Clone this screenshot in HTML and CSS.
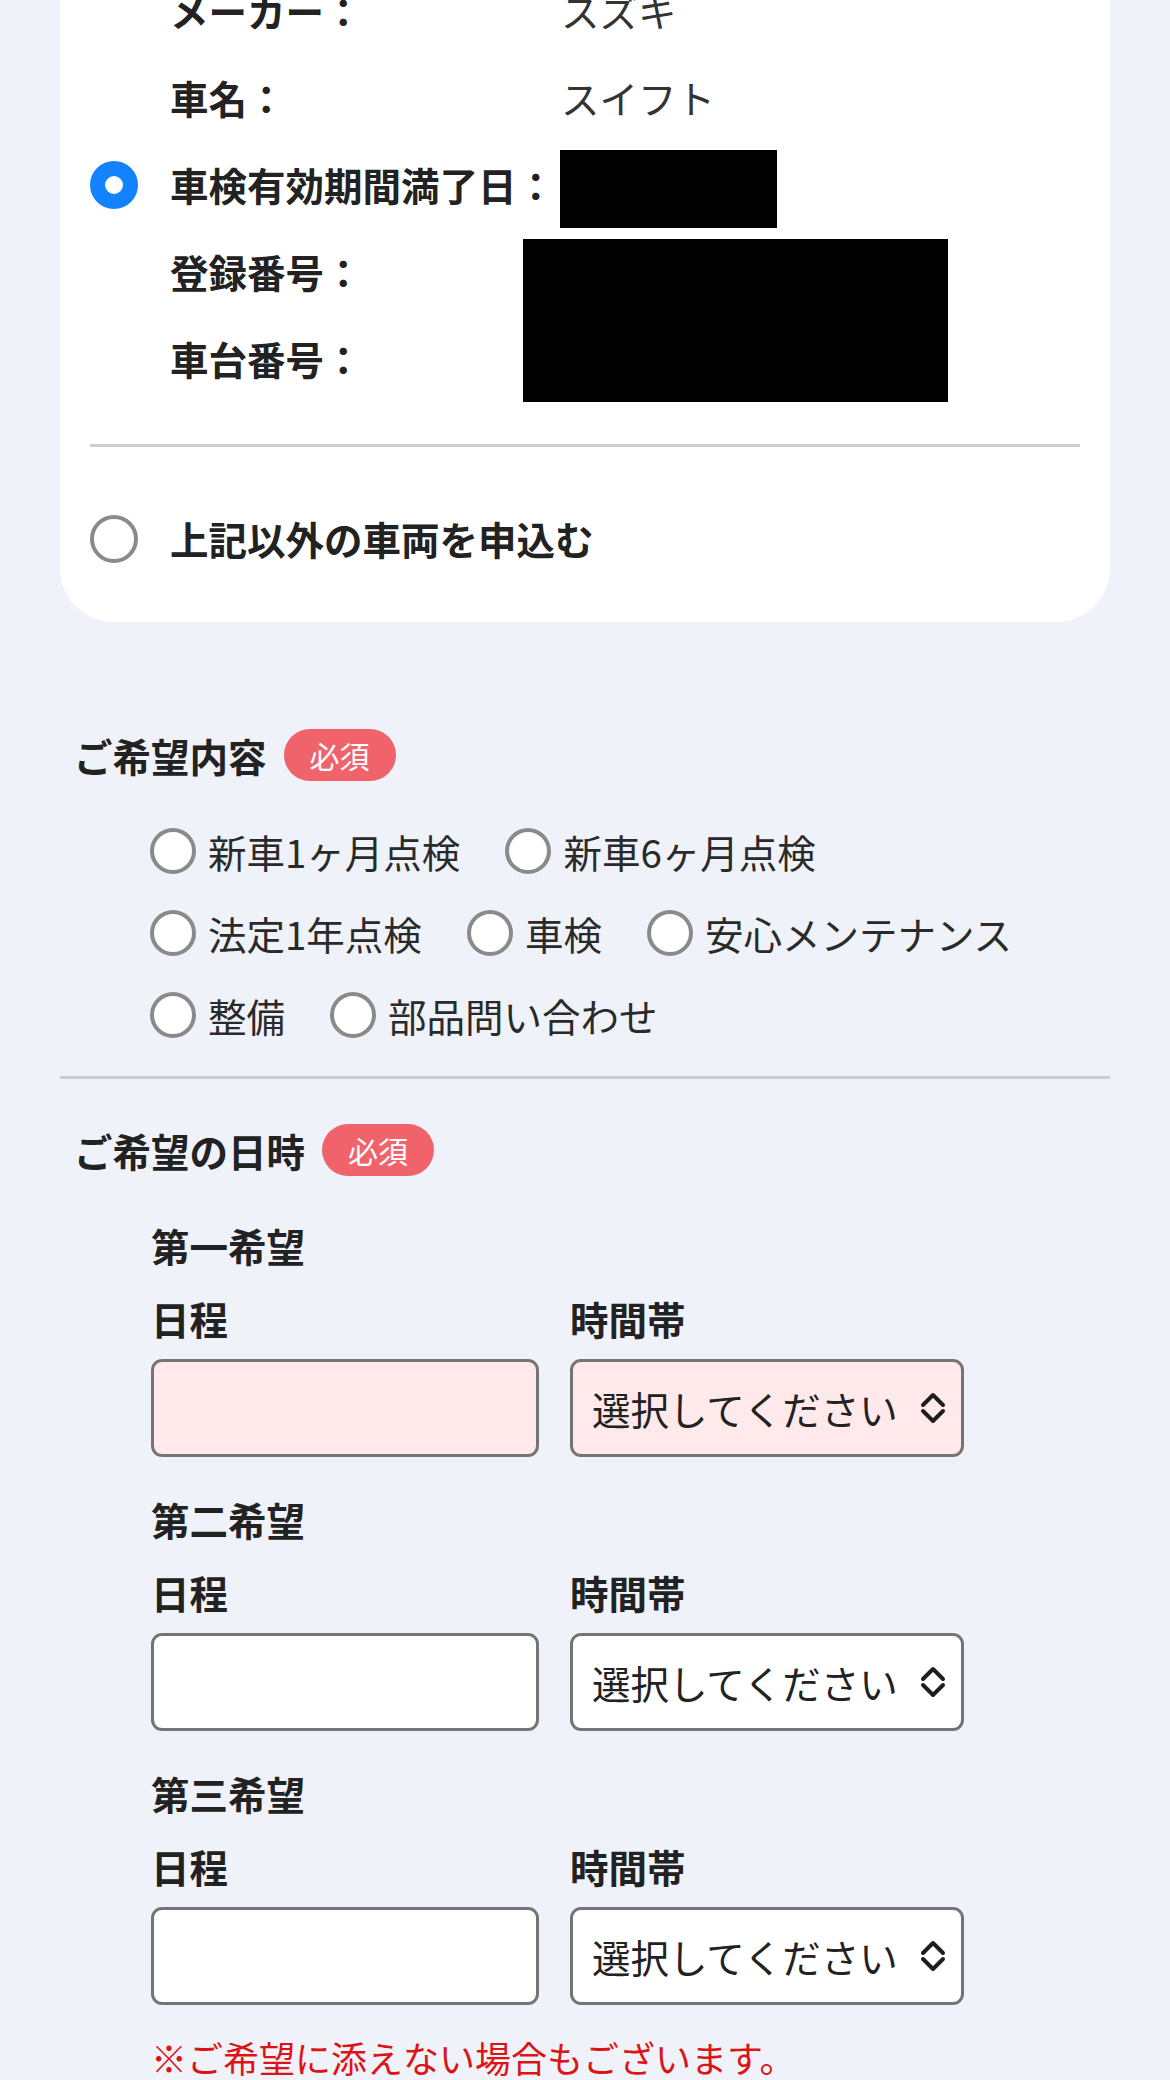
FILE: index.html
```html
<!DOCTYPE html>
<html lang="ja">
<head>
<meta charset="utf-8">
<title>ご予約フォーム</title>
<link rel="stylesheet" href="styles.css">
</head>
<body>
<div class="page">
  <div class="card">
    <div class="info">
      <span class="cell-radio"></span><span class="label">メーカー：</span><span class="value">スズキ</span>
      <span class="cell-radio"></span><span class="label">車名：</span><span class="value">スイフト</span>
      <span class="cell-radio"><span class="radio radio-on"></span></span><span class="label">車検有効期間満了日：</span><span class="redact redact-a"></span>
      <span class="cell-radio"></span><span class="label">登録番号：</span><span class="redact redact-b"></span>
      <span class="cell-radio"></span><span class="label">車台番号：</span>
    </div>
    <div class="rule rule-card"></div>
    <div class="other">
      <span class="radio"></span><span class="label">上記以外の車両を申込む</span>
    </div>
  </div>

  <section class="section">
    <div class="heading heading-first"><span>ご希望内容</span><span class="badge">必須</span></div>
    <div class="options">
      <div class="opt-row">
        <label class="opt"><span class="radio small"></span>新車1ヶ月点検</label>
        <label class="opt"><span class="radio small"></span>新車6ヶ月点検</label>
      </div>
      <div class="opt-row">
        <label class="opt"><span class="radio small"></span>法定1年点検</label>
        <label class="opt"><span class="radio small"></span>車検</label>
        <label class="opt"><span class="radio small"></span>安心メンテナンス</label>
      </div>
      <div class="opt-row">
        <label class="opt"><span class="radio small"></span>整備</label>
        <label class="opt"><span class="radio small"></span>部品問い合わせ</label>
      </div>
    </div>
    <div class="rule rule-section"></div>
    <div class="heading heading-second"><span>ご希望の日時</span><span class="badge">必須</span></div>

    <div class="schedule">
      <div class="group">
        <div class="group-title">第一希望</div>
        <div class="fields">
          <div class="field-label">日程</div>
          <div class="field-label">時間帯</div>
          <div class="box input pink"></div>
          <div class="box select pink"><span>選択してください</span><svg class="chev" viewBox="0 0 26 32" width="26" height="32"><path d="M3 13 L13 3 L23 13 M3 19 L13 29 L23 19" fill="none" stroke="#1e1e1e" stroke-width="4" stroke-linecap="round" stroke-linejoin="round"/></svg></div>
        </div>
      </div>
      <div class="group">
        <div class="group-title">第二希望</div>
        <div class="fields">
          <div class="field-label">日程</div>
          <div class="field-label">時間帯</div>
          <div class="box input"></div>
          <div class="box select"><span>選択してください</span><svg class="chev" viewBox="0 0 26 32" width="26" height="32"><path d="M3 13 L13 3 L23 13 M3 19 L13 29 L23 19" fill="none" stroke="#1e1e1e" stroke-width="4" stroke-linecap="round" stroke-linejoin="round"/></svg></div>
        </div>
      </div>
      <div class="group">
        <div class="group-title">第三希望</div>
        <div class="fields">
          <div class="field-label">日程</div>
          <div class="field-label">時間帯</div>
          <div class="box input"></div>
          <div class="box select"><span>選択してください</span><svg class="chev" viewBox="0 0 26 32" width="26" height="32"><path d="M3 13 L13 3 L23 13 M3 19 L13 29 L23 19" fill="none" stroke="#1e1e1e" stroke-width="4" stroke-linecap="round" stroke-linejoin="round"/></svg></div>
        </div>
      </div>
      <p class="note">※ご希望に添えない場合もございます。</p>
    </div>
  </section>
</div>
</body>
</html>
```

FILE: styles.css
```css
html, body {
  margin: 0;
  padding: 0;
}
body {
  background: #eff2f8;
  font-family: "Noto Sans CJK JP", "Noto Sans", sans-serif;
  font-size: 38.5px;
  color: #222;
  overflow: hidden;
}
.page {
  width: 1170px;
}
.card {
  margin: -60px 60px 0;
  padding: 27px 30px 40px;
  background: #fff;
  border-radius: 54px;
}
.info {
  display: grid;
  grid-template-columns: 80px 391px 1fr;
  grid-auto-rows: 87px;
  align-items: center;
}
.label {
  font-weight: 700;
  white-space: nowrap;
  line-height: 1.2;
}
.value {
  color: #333;
  line-height: 1.2;
}
.cell-radio {
  display: flex;
  align-items: center;
}
.radio {
  box-sizing: border-box;
  display: inline-block;
  width: 48px;
  height: 48px;
  border-radius: 50%;
  border: 4.5px solid #8a8a8a;
  background: #fff;
  flex: none;
}
.radio-on {
  border: 15.5px solid #1282ff;
}
.radio.small {
  width: 46px;
  height: 46px;
}
.redact {
  background: #000;
  display: block;
}
.redact-a {
  width: 217px;
  height: 78px;
  align-self: end;
  margin-left: -1px;
}
.redact-b {
  grid-column: 3;
  grid-row: 4 / span 2;
  width: 425px;
  height: 163px;
  align-self: end;
  margin-left: -38px;
}
.rule {
  height: 3px;
  background: #cdcdcd;
}
.rule-card {
  margin-top: 42px;
}
.other {
  margin-top: 48px;
  height: 87px;
  display: flex;
  align-items: center;
  gap: 32px;
}
.section {
  margin: 0 60px;
}
.heading {
  height: 52px;
  display: flex;
  align-items: center;
  gap: 17px;
  padding-left: 14px;
  font-weight: 700;
}
.heading-first {
  margin-top: 107px;
}
.heading-second {
  margin-top: 45px;
}
.badge {
  display: inline-block;
  height: 52px;
  line-height: 52px;
  padding: 0 26px;
  border-radius: 26px;
  background: #f0636b;
  color: #fff;
  font-size: 30px;
  font-weight: 400;
}
.options {
  margin-top: 29px;
  padding-left: 90px;
}
.opt-row {
  height: 82px;
  display: flex;
  align-items: center;
  gap: 45px;
}
.opt {
  display: flex;
  align-items: center;
  gap: 12px;
  color: #2a2a2a;
  white-space: nowrap;
}
.rule-section {
  margin-top: 20px;
}
.schedule {
  padding-left: 91px;
}
.group {
  margin-top: 41px;
}
.group + .group {
  margin-top: 34px;
}
.group-title {
  height: 56px;
  line-height: 56px;
  font-weight: 700;
}
.fields {
  margin-top: 17px;
  display: grid;
  grid-template-columns: 388px 394px;
  column-gap: 31px;
  row-gap: 13px;
}
.field-label {
  height: 56px;
  line-height: 56px;
  font-weight: 700;
}
.box {
  box-sizing: border-box;
  height: 98px;
  border: 3px solid #747474;
  border-radius: 11px;
  background: #fff;
}
.box.pink {
  background: #ffe9ea;
}
.select {
  display: flex;
  align-items: center;
  justify-content: space-between;
  padding: 0 15px 0 19px;
  color: #222;
  white-space: nowrap;
}
.chev {
  display: block;
  flex: none;
}
.note {
  margin: 24px 0 0;
  height: 56px;
  line-height: 56px;
  font-size: 36px;
  color: #dc1416;
}
```
